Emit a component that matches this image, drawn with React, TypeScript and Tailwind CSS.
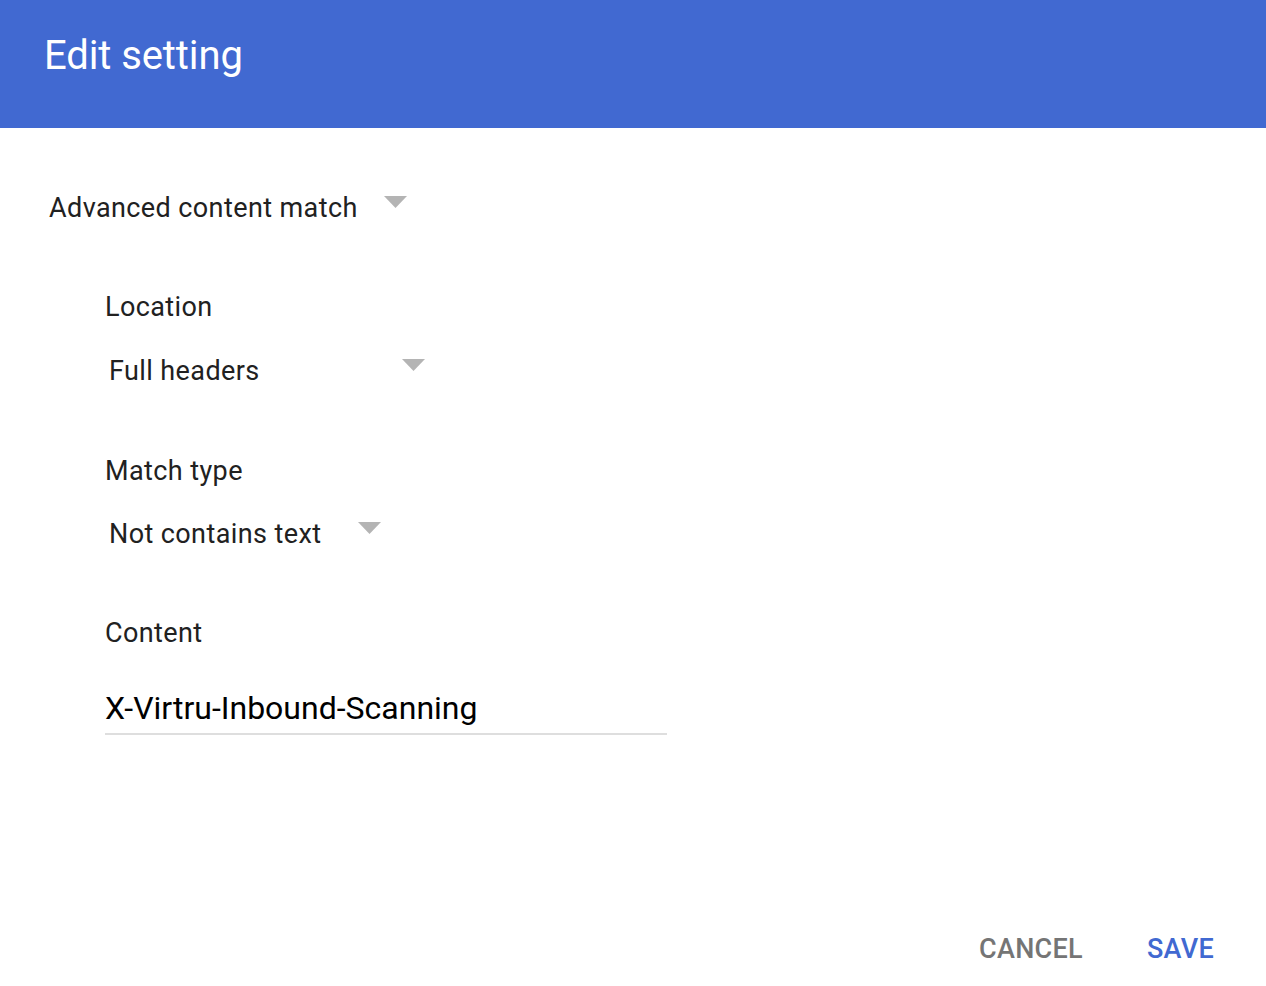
import React from 'react';

const Arrow = () => (
    <svg width="23" height="12" viewBox="0 0 23 12" className="mt-[4px] shrink-0">
        <polygon points="0,0 23,0 11.5,12" fill="#b4b4b4" />
    </svg>
);

function Dropdown({ label, width }: { label: string; width: string }) {
    return (
        <div className="flex items-start">
            <span className={`${width} shrink-0`}>{label}</span>
            <Arrow />
        </div>
    );
}

export default function App() {
    return (
        <div className="w-full h-[986px] flex flex-col bg-white text-[#212121]" style={{ fontFamily: 'Roboto, "Noto Sans", sans-serif' }}>
            <div className="h-[128px] shrink-0 bg-[#4169d1] pl-[44px] pt-[32px]">
                <h1 className="text-[40px] leading-[48px] text-white font-normal tracking-[-0.1px]">Edit setting</h1>
            </div>

            <div className="flex-1 pl-[49px] pt-[64px] text-[27px] leading-[32px] tracking-[0.4px]">
                <Dropdown label="Advanced content match" width="w-[335px]" />

                <div className="pl-[56px]">
                    <div className="mt-[67px]">Location</div>
                    <div className="mt-[32px] pl-[4px]">
                        <Dropdown label="Full headers" width="w-[293px]" />
                    </div>

                    <div className="mt-[68px]">Match type</div>
                    <div className="mt-[31px] pl-[4px]">
                        <Dropdown label="Not contains text" width="w-[249px]" />
                    </div>

                    <div className="mt-[67px]">Content</div>
                    <div className="mt-[40px] w-[562px] border-b-2 border-[#dedede] pb-[6px] text-[32px] leading-[38px] text-black tracking-normal">
                        X-Virtru-Inbound-Scanning
                    </div>
                </div>
            </div>

            <div className="flex justify-end gap-[64px] pr-[52px] pb-[21px] text-[27px] leading-[32px] font-medium">
                <button className="text-[#757575] tracking-[0.3px]">CANCEL</button>
                <button className="text-[#4169d1] tracking-[0.3px]">SAVE</button>
            </div>
        </div>
    );
}
